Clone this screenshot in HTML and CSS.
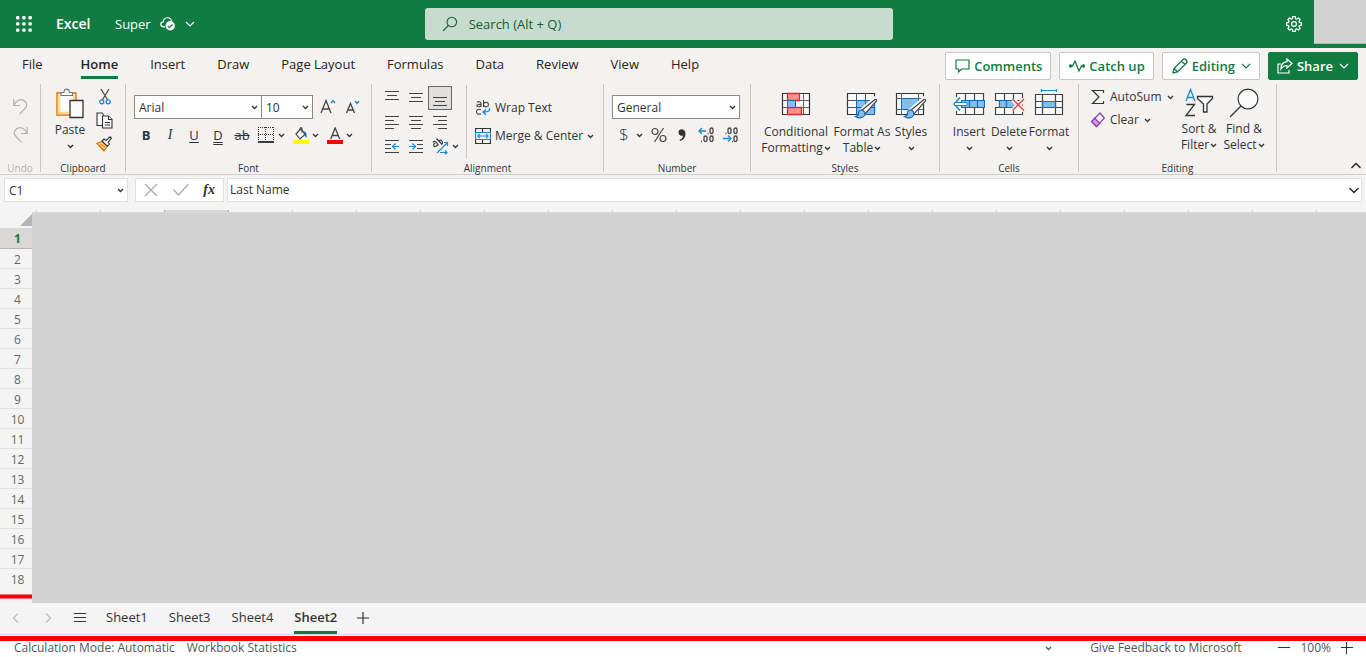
FILE: index.html
```html
<!DOCTYPE html>
<html lang="en">
<head>
<meta charset="utf-8">
<meta name="viewport" content="width=device-width, initial-scale=1">
<title>Super - Excel</title>
<link rel="stylesheet" href="styles.css">
</head>
<body>
<svg class="symbols" aria-hidden="true">
  <symbol id="chev" viewBox="0 0 7 7"><path d="M1 2l2.5 2.500L6 2" fill="none" stroke="currentColor" stroke-width="1.300"/></symbol>
  <symbol id="chev-wide" viewBox="0 0 10 10"><path d="M1 3l4 4 4-4" fill="none" stroke="currentColor" stroke-width="1.100"/></symbol>
</svg>

<header class="titlebar">
  <button class="bare launcher" aria-label="App launcher">
    <svg width="16" height="16" viewBox="0 0 16 16" fill="#fff"><rect width="3.4" height="3.4" rx="1"/><rect x="6.2" width="3.4" height="3.4" rx="1"/><rect x="12.4" width="3.4" height="3.4" rx="1"/><rect y="6.2" width="3.4" height="3.4" rx="1"/><rect x="6.2" y="6.2" width="3.4" height="3.4" rx="1"/><rect x="12.4" y="6.2" width="3.4" height="3.4" rx="1"/><rect y="12.4" width="3.4" height="3.4" rx="1"/><rect x="6.2" y="12.4" width="3.4" height="3.4" rx="1"/><rect x="12.4" y="12.4" width="3.4" height="3.4" rx="1"/></svg>
  </button>
  <a class="brand" href="#">Excel</a>
  <button class="bare docname"><span>Super</span>
    <svg width="16" height="14" viewBox="0 0 16 14"><path d="M5 9.8H3.6C-.2 9.4-.1 5 3.3 4.8 3.7-.4 10.5-.5 11.4 4" fill="none" stroke="#fff" stroke-width="1.2"/><circle cx="10.2" cy="8.8" r="4.7" fill="#fff"/><path d="M7.8 8.9l1.7 1.7 3.1-3.3" fill="none" stroke="#107c41" stroke-width="1.2"/></svg>
    <svg width="10" height="10"><use href="#chev-wide"/></svg>
  </button>
  <label class="search">
    <svg width="16" height="16" viewBox="0 0 16 16" fill="none" stroke="#185c37" stroke-width="1.1"><circle cx="9.8" cy="6" r="4.8"/><path d="M6.3 9.5L1 14.8"/></svg>
    <input type="search" placeholder="Search (Alt + Q)" aria-label="Search">
  </label>
  <button class="bare gear" aria-label="Settings">
    <svg width="16" height="16" viewBox="0 0 16 16" fill="none" stroke="#fff" stroke-width="1.2"><path d="M6.8.7h2.4l.5 2 1 .4 1.8-1.1 1.6 1.6L13 5.400l.4 1 2 .5v2.300l-2 .5-.4 1 1.100 1.800-1.600 1.600L10.700 13l-1 .4-.5 2H6.800l-.5-2-1-.4-1.800 1.100-1.600-1.600L3 10.700l-.4-1-2-.5V6.900l2-.5.4-1-1.100-1.800L3.500 2l1.800 1.100 1-.4z"/><circle cx="8" cy="8" r="2.4"/></svg>
  </button>
  <div class="account"></div>
</header>

<div class="tabs-row">
  <nav class="tabs">
    <button class="tab">File</button><button class="tab active">Home</button><button class="tab">Insert</button><button class="tab">Draw</button><button class="tab">Page Layout</button><button class="tab">Formulas</button><button class="tab">Data</button><button class="tab">Review</button><button class="tab">View</button><button class="tab">Help</button>
  </nav>
  <div class="actions">
    <button class="action"><svg width="15" height="14" viewBox="0 0 15 14" fill="none" stroke="currentColor" stroke-width="1.2"><path d="M1 1h13v9H6.500L3.500 13v-3H1z"/></svg>Comments</button>
    <button class="action"><svg width="16" height="14" viewBox="0 0 16 14" fill="none" stroke="currentColor" stroke-width="1.300"><path d="M1 7h2.500L6 2l4 10 2.500-5H15"/><circle cx="1.500" cy="7" r="1" fill="currentColor"/><circle cx="14.500" cy="7" r="1" fill="currentColor"/></svg>Catch up</button>
    <button class="action"><svg width="16" height="16" viewBox="0 0 16 16" fill="none" stroke="currentColor" stroke-width="1.300"><path d="M1 15l1-4.500L11 1.500c2-1.500 5 1 3.500 3.500L5.500 14zM9.500 3l3.500 3.500M2.300 10.500l3.200 3.200"/></svg>Editing<svg width="10" height="10"><use href="#chev-wide"/></svg></button>
    <button class="action primary"><svg width="16" height="16" viewBox="0 0 16 16" fill="none" stroke="currentColor" stroke-width="1.200"><path d="M4 6H1v9h11v-3M10 1l5 4.500L10 10V7.500C7 7.500 5.500 8.500 4 11c0-4.500 2.500-7 6-7.300z"/></svg>Share<svg width="10" height="10"><use href="#chev-wide"/></svg></button>
  </div>
</div>

<section class="ribbon" aria-label="Home ribbon">
  <div class="group g-undo">
    <div class="group-body undo-body">
      <button class="bare" aria-label="Undo"><svg width="15" height="17" viewBox="0 0 15 17" fill="none" stroke="#b5b3b1" stroke-width="1.200"><path d="M.8 1v6.500H7M1 7.200C3 3 7 0 11 2.500c3.500 2.500 3.500 5.500 1 8L6.500 16.300"/></svg></button>
      <button class="bare" aria-label="Redo"><svg width="15" height="17" viewBox="0 0 15 17" fill="none" stroke="#b5b3b1" stroke-width="1.200"><path d="M14.200 1v6.500H8M14 7.200C12 3 8 0 4 2.500.5 5 .5 8 3 10.500l5.500 5.800"/></svg></button>
    </div>
    <span class="group-label muted">Undo</span>
  </div>

  <div class="group g-clipboard">
    <div class="group-body clip-body">
      <button class="bare paste">
        <svg width="28" height="32" viewBox="0 0 28 32"><path d="M1 5h19v22H1z" fill="#fafafa" stroke="#e07000" stroke-width="1.400"/><path d="M3 7v18h10" fill="none" stroke="#f8dc8c" stroke-width="2.400"/><path d="M18 7v5" stroke="#f8dc8c" stroke-width="2.400"/><path d="M5 7.500V4.500h3C8 0 13.500 0 13.500 4.500h3v3z" fill="#fafafa" stroke="#777" stroke-width="1.100"/><path d="M14 12.500h13v17H14z" fill="#fafafa" stroke="#333" stroke-width="1.300"/></svg>
        <span>Paste</span>
        <svg width="7" height="7"><use href="#chev"/></svg>
      </button>
      <div class="clip-small">
        <button class="bare" aria-label="Cut"><svg width="12" height="17" viewBox="0 0 12 17" fill="none"><path d="M2 1l6.700 11M10 1L3.300 12" stroke="#444" stroke-width="1.200"/><circle cx="2.800" cy="13.800" r="2" stroke="#1e88d2" stroke-width="1.300"/><circle cx="9.200" cy="13.800" r="2" stroke="#1e88d2" stroke-width="1.300"/></svg></button>
        <button class="bare" aria-label="Copy"><svg width="17" height="17" viewBox="0 0 17 17" fill="#fafafa" stroke="#333" stroke-width="1.100"><path d="M6 13.500H1V1h5l2 2.500"/><path d="M6.500 4h6l3.500 3.500V16H6.500z"/><path d="M12.500 4v3.500H16M9 10.500h5M9 13h5"/></svg></button>
        <button class="bare" aria-label="Format painter"><svg width="17" height="16" viewBox="0 0 17 16"><path d="M1 7.500l5-2 5 5-3 4.500z" fill="#f9d58a" stroke="#e07000" stroke-width="1.200"/><path d="M3 9.500l5 4.500M4 8l5 3" stroke="#e07000"/><path d="M6 5l2-2 2 1.500L14 .8l1.500 1.500-3.500 4L13.500 8l-2 2.300z" fill="#fafafa" stroke="#333" stroke-width="1.100"/></svg></button>
      </div>
    </div>
    <span class="group-label">Clipboard</span>
  </div>

  <div class="group g-font">
    <div class="group-body font-body">
      <div class="row row-top">
        <span class="combo combo-font"><select aria-label="Font"><option>Arial</option></select><svg width="7" height="7"><use href="#chev"/></svg></span><span class="combo combo-size"><select aria-label="Font size"><option>10</option></select><svg width="7" height="7"><use href="#chev"/></svg></span>
        <button class="bare grow" aria-label="Increase font size"><svg width="16" height="16" viewBox="0 0 16 16" fill="none"><path d="M1 14L6 1.500 11 14M2.700 10h6.600" stroke="#444" stroke-width="1.300"/><path d="M11 4l2-2.500L15 4" stroke="#1e88d2" stroke-width="1.300"/></svg></button>
        <button class="bare" aria-label="Decrease font size"><svg width="16" height="16" viewBox="0 0 16 16" fill="none"><path d="M1.500 14l4-9.500 4 9.500M3 11h5" stroke="#444" stroke-width="1.300"/><path d="M10 2l2 2.500L14 2" stroke="#1e88d2" stroke-width="1.300"/></svg></button>
      </div>
      <div class="row">
        <button class="bare fmt bold">B</button><button class="bare fmt italic">I</button><button class="bare fmt under">U</button><button class="bare fmt dunder">D</button><button class="bare fmt strike">ab</button>
        <button class="bare fmt" aria-label="Borders"><svg width="16" height="16" viewBox="0 0 16 16" fill="none" stroke="#333"><path d="M0 .5h16M0 7.500h16M.5 0v14M7.500 0v14M15.500 0v14" stroke-dasharray="1 1"/><path d="M0 15h16" stroke="#000" stroke-width="1.500"/></svg></button><svg class="drop" width="7" height="7"><use href="#chev"/></svg>
        <button class="bare fill" aria-label="Fill color"><svg width="16" height="17" viewBox="0 0 16 17"><path d="M3 7l5-5.500 4 6L7 12z" fill="#fafafa" stroke="#444" stroke-width="1.200"/><path d="M7 4V1.500c0-1.500 2-1.500 2 0V6" fill="none" stroke="#444"/><path d="M10 4.500c3-.5 4 2 3.500 6.500-1.500-1-2-3.500-1.500-4.500z" fill="#1565b0"/><path d="M0 13h16v4H0z" fill="#ff0"/></svg></button><svg class="drop" width="7" height="7"><use href="#chev"/></svg>
        <button class="bare fill" aria-label="Font color"><svg width="16" height="17" viewBox="0 0 16 17"><path d="M3.700 12L8.200 1 12.700 12M5.300 8.500h5.800" fill="none" stroke="#444" stroke-width="1.300"/><path d="M0 13h16v4H0z" fill="red"/></svg></button><svg class="drop" width="7" height="7"><use href="#chev"/></svg>
      </div>
    </div>
    <span class="group-label">Font</span>
  </div>

  <div class="group g-align">
    <div class="group-body align-body">
      <div class="align-grid">
        <button class="bare" aria-label="Top align"><svg class="lines" width="16" height="16" viewBox="0 0 16 16"><path d="M1 1.500h14M3 5.500h10M1 9.500h14"/></svg></button>
        <button class="bare" aria-label="Middle align"><svg class="lines" width="16" height="16" viewBox="0 0 16 16"><path d="M1 3.500h14M3 7.500h10M1 11.500h14"/></svg></button>
        <button class="bare pressed" aria-label="Bottom align"><svg class="lines" width="16" height="16" viewBox="0 0 16 16"><path d="M1 7.500h14M3 11.500h10M1 15.500h14"/></svg></button>
        <button class="bare" aria-label="Align left"><svg class="lines" width="16" height="16" viewBox="0 0 16 16"><path d="M1 2.500h14M1 6.500h9M1 10.500h14M1 14.500h9"/></svg></button>
        <button class="bare" aria-label="Center"><svg class="lines" width="16" height="16" viewBox="0 0 16 16"><path d="M1 2.500h14M3 6.500h10M1 10.500h14M3 14.500h10"/></svg></button>
        <button class="bare" aria-label="Align right"><svg class="lines" width="16" height="16" viewBox="0 0 16 16"><path d="M1 2.500h14M6 6.500h9M1 10.500h14M6 14.500h9"/></svg></button>
        <button class="bare" aria-label="Decrease indent"><svg class="lines" width="16" height="16" viewBox="0 0 16 16"><path d="M1 2.500h14M1 6.500h6M1 10.500h6M1 14.500h14"/><path class="blue" d="M15 8.500H9M11.500 5.500l-3 3 3 3"/></svg></button>
        <button class="bare" aria-label="Increase indent"><svg class="lines" width="16" height="16" viewBox="0 0 16 16"><path d="M1 2.500h14M9 6.500h6M9 10.500h6M1 14.500h14"/><path class="blue" d="M1 8.500h6M4.500 5.500l3 3-3 3"/></svg></button>
        <button class="bare" aria-label="Orientation"><svg class="lines" width="17" height="17" viewBox="0 0 17 17"><path d="M1 4.500c1-2.500 3.500-1 5.500 3M3.500 5C0 6 2 11 5.500 7M4.500.5L10 6.500M7 3c2-2.500 5 1.500 2.500 3.500"/><path class="blue" d="M5 15L15.500 4.500M12 4.500h3.500V8M8 14.500h7M13 12.500l2 2-2 2"/></svg></button>
        <svg class="drop" width="7" height="7"><use href="#chev"/></svg>
      </div>
      <div class="align-text">
        <button class="bare"><svg width="16" height="17" viewBox="0 0 16 17" fill="none" stroke="#444" stroke-width="1.100"><path d="M2 3.500c1-1.500 4-1 4 1V8M6 5.500C3 5 1.500 6 2 7s3 1.300 4-.5M8.500 1v7M8.500 5c1-2.500 5-2 5 .5s-4 3.500-5 .5M6 10.800c-3-1.500-4.500 0-4.500 2s2 3.200 4.500 2"/><path d="M14.500 9v1.500c0 2-2 2.500-6 2.500M11 10.500L8 13l3 3" stroke="#1e88d2" stroke-width="1.300"/></svg>Wrap Text</button>
        <button class="bare"><svg width="16" height="16" viewBox="0 0 16 16" fill="none" stroke="#333"><path d="M.5.5h15v15H.5zM7.500.5v4M7.500 12v3.500" stroke-width="1.200"/><path d="M.5 4.500h15v7H.5z" fill="#eef6fc" stroke="#1e88d2" stroke-width="1.200"/><path d="M3 8h10M5 5.800L2.800 8 5 10.200M11 5.800L13.200 8 11 10.200" stroke="#1e88d2" stroke-width="1.200"/></svg>Merge &amp; Center<svg width="7" height="7"><use href="#chev"/></svg></button>
      </div>
    </div>
    <span class="group-label">Alignment</span>
  </div>

  <div class="group g-number">
    <div class="group-body font-body">
      <div class="row row-top"><span class="combo combo-num"><select aria-label="Number format"><option>General</option></select><svg width="7" height="7"><use href="#chev"/></svg></span></div>
      <div class="row number-row">
        <button class="bare num dollar">$</button><svg class="drop" width="7" height="7"><use href="#chev"/></svg>
        <button class="bare num" aria-label="Percent"><svg width="16" height="16" viewBox="0 0 16 16" fill="none" stroke="#444" stroke-width="1.200"><circle cx="4" cy="4.500" r="3"/><circle cx="12" cy="11.500" r="3"/><path d="M12.500 1L3.500 15"/></svg></button>
        <button class="bare num" aria-label="Comma"><svg width="10" height="14" viewBox="0 0 10 14"><path d="M1.500 4c0-4 7-4 7 1.500 0 4-2 6.500-5.500 7.500l-.5-1C4.500 11 6 9.500 6 7.500 3.500 8.500 1.500 6.500 1.500 4z" fill="#333"/></svg></button>
        <button class="bare num" aria-label="Increase decimal"><svg width="17" height="16" viewBox="0 0 17 16" fill="none" stroke="#444" stroke-width="1.300"><path d="M8 4H1M4 1L1 4l3 3" stroke="#1e88d2"/><rect x="12" y="1" width="3" height="5.500" rx="1.500"/><rect x="6" y="9" width="3" height="5.500" rx="1.500"/><rect x="12" y="9" width="3" height="5.500" rx="1.500"/><path d="M9.500 6.500h1M3 14.500h1"/></svg></button>
        <button class="bare num" aria-label="Decrease decimal"><svg width="17" height="16" viewBox="0 0 17 16" fill="none" stroke="#444" stroke-width="1.300"><path d="M1 11.500h8M6 8.500l3 3-3 3" stroke="#1e88d2"/><rect x="6" y="1" width="3" height="5.500" rx="1.500"/><rect x="12" y="1" width="3" height="5.500" rx="1.500"/><rect x="12" y="9" width="3" height="5.500" rx="1.500"/><path d="M3.500 6.500h1M10 14.500h1"/></svg></button>
      </div>
    </div>
    <span class="group-label">Number</span>
  </div>

  <div class="group g-styles">
    <div class="group-body big-body">
      <button class="bare big w-cond"><svg width="30" height="30" viewBox="0 0 30 30"><path d="M1.500 4.500h27v21h-27z" fill="#fafafa"/><path d="M1 11.500h28M1 18.500h28M6.500 4v21M14.500 4v21M22.500 4v21" stroke="#666"/><path d="M1.500 4.500h27v21h-27z" fill="none" stroke="#333" stroke-width="1.200"/><path d="M6.500 4.500h12v7h-12zM6.500 18.500h14v7h-14z" fill="#ff9090" stroke="#d92b2b" stroke-width="1.300"/><path d="M6.500 11.500h8v7h-8z" fill="#83bdec" stroke="#1769b0"/></svg><span>Conditional<br>Formatting<svg width="7" height="7"><use href="#chev"/></svg></span></button>
      <button class="bare big w-fmt"><svg width="32" height="30" viewBox="0 0 32 30"><path d="M1.500 4.500h27v21h-27z" fill="#fafafa" stroke="#333" stroke-width="1.200"/><path d="M10.500 11.500h18v14h-18z" fill="#83bdec"/><path d="M1 11.500h27M1 18.500h27M10.500 4v21M19.500 4v21" stroke="#555"/><path d="M10.500 11.500h18v14h-18zM10.500 18.500h18M19.500 11.500v14" fill="none" stroke="#1769b0"/><path d="M31 9L14 24" stroke="#f3f2f1" stroke-width="6"/><path d="M29 10.500c1-.5 2 .5 1.500 1.500L19 25l-4-3z" fill="#fafafa" stroke="#444" stroke-width="1.200"/><path d="M15 21c3 0 5 3 3.500 5.500-2 3-6 3-9 1 3-.5 3-2 3-3.500s1-3 2.500-3z" fill="#83bdec" stroke="#1769b0" stroke-width="1.200"/></svg><span>Format As<br>Table<svg width="7" height="7"><use href="#chev"/></svg></span></button>
      <button class="bare big w-sty"><svg width="32" height="30" viewBox="0 0 32 30"><path d="M1.500 4.500h27v21h-27z" fill="#fafafa" stroke="#333" stroke-width="1.200"/><path d="M1 9.500h27M1 20.500h27M6.500 4v21M23.500 4v21" stroke="#666"/><path d="M6.500 9.500h17v11h-17z" fill="#83bdec" stroke="#1769b0"/><path d="M31 9L14 24" stroke="#f3f2f1" stroke-width="6"/><path d="M29 10.500c1-.5 2 .5 1.500 1.500L19 25l-4-3z" fill="#fafafa" stroke="#444" stroke-width="1.200"/><path d="M15 21c3 0 5 3 3.500 5.500-2 3-6 3-9 1 3-.5 3-2 3-3.500s1-3 2.500-3z" fill="#83bdec" stroke="#1769b0" stroke-width="1.200"/></svg><span>Styles<br><svg width="7" height="7"><use href="#chev"/></svg></span></button>
    </div>
    <span class="group-label">Styles</span>
  </div>

  <div class="group g-cells">
    <div class="group-body big-body">
      <button class="bare big w-cell"><svg width="32" height="30" viewBox="0 0 32 30"><path d="M3.500 4.500h27v21h-27zM12.500 4v21M21.500 4v21M3.500 11.500h27M3.500 18.500h27" fill="#fafafa" stroke="#444" stroke-width="1.200"/><path d="M8.500 11.500h23v7h-23zM16.500 11.500v7M24.500 11.500v7" fill="#83bdec" stroke="#1769b0" stroke-width="1.200"/><path d="M0 8h8v14H0z" fill="#f3f2f1"/><path d="M7 8.500L1 15l6 6.500" fill="none" stroke="#1e88d2" stroke-width="1.500"/><path d="M2 13.500h12v3H2" fill="#fafafa" stroke="#1e88d2"/></svg><span>Insert<br><svg width="7" height="7"><use href="#chev"/></svg></span></button>
      <button class="bare big w-cell"><svg width="32" height="30" viewBox="0 0 32 30"><path d="M2.500 4.500h27v21h-27zM11.500 4v21M20.500 4v21M2.500 11.500h27M2.500 18.500h27" fill="#fafafa" stroke="#444" stroke-width="1.200"/><path d="M0 12h6v6H0z" fill="#f3f2f1"/><path d="M6.500 11.500h17v7h-17zM13.500 11.500v7" fill="#83bdec" stroke="#1769b0" stroke-width="1.200"/><path d="M20 10.500l11 11m0-11l-11 11" stroke="#f3f2f1" stroke-width="5"/><path d="M19.500 10L31 21.500M31 10L19.500 21.500" stroke="#e64545" stroke-width="1.400"/></svg><span>Delete<br><svg width="7" height="7"><use href="#chev"/></svg></span></button>
      <button class="bare big w-cell"><svg width="30" height="30" viewBox="0 0 30 30"><path d="M1.500 5.500h27v20h-27zM8.500 5v20M21.500 5v20M1.500 12.500h27M1.500 18.500h27" fill="#fafafa" stroke="#444" stroke-width="1.200"/><path d="M8.500 12.500h13v6h-13z" fill="#83bdec" stroke="#1769b0" stroke-width="1.200"/><path d="M7.500 0v3M22.500 0v3M7.500 1.500h15" stroke="#1e88d2" stroke-width="1.200"/></svg><span>Format<br><svg width="7" height="7"><use href="#chev"/></svg></span></button>
    </div>
    <span class="group-label">Cells</span>
  </div>

  <div class="group g-edit">
    <div class="group-body edit-body">
      <div class="edit-small">
        <button class="bare"><svg width="14" height="16" viewBox="0 0 14 16" fill="none" stroke="#333" stroke-width="1.200"><path d="M12.500 4V1.500h-11L8 8l-6.500 6.500h11V12"/></svg>AutoSum<svg width="7" height="7"><use href="#chev"/></svg></button>
        <button class="bare"><svg width="14" height="16" viewBox="0 0 14 16"><path d="M.7 9.500l8.300-8.500 4.300 5L5.500 14.500z" fill="#fafafa" stroke="#9b3fae" stroke-width="1.300"/><path d="M.7 9.500l3-3.200 5 5-3.200 3.200z" fill="#d89be0" stroke="#9b3fae" stroke-width="1.300"/></svg>Clear<svg width="7" height="7"><use href="#chev"/></svg></button>
      </div>
      <button class="bare big w-sort"><svg width="30" height="30" viewBox="0 0 30 30" fill="none" stroke-width="1.300"><path d="M2 13l4.500-11.500L11 13M3.500 9.500h6" stroke="#1e88d2"/><path d="M2.500 16.500h8L2 27.500h9" stroke="#333"/><path d="M13.500 8.500h15v2L23 16v8h-3.500v-8l-6-5.500z" fill="#fafafa" stroke="#333"/></svg><span>Sort &amp;<br>Filter<svg width="7" height="7"><use href="#chev"/></svg></span></button>
      <button class="bare big w-find"><svg width="30" height="30" viewBox="0 0 30 30" fill="none" stroke="#333" stroke-width="1.200"><circle cx="19" cy="11" r="9.900" fill="#fafafa"/><path d="M12 18L1 29"/></svg><span>Find &amp;<br>Select<svg width="7" height="7"><use href="#chev"/></svg></span></button>
    </div>
    <span class="group-label">Editing</span>
  </div>
  <button class="bare collapse" aria-label="Collapse ribbon"><svg width="10" height="10" viewBox="0 0 10 10" fill="none" stroke="#222" stroke-width="1.400"><path d="M.5 7L5 2.500 9.500 7"/></svg></button>
</section>

<div class="formula-row">
  <span class="combo name-box"><select aria-label="Name box"><option>C1</option></select><svg width="7" height="7"><use href="#chev"/></svg></span>
  <div class="fx-tools">
    <button class="bare" aria-label="Cancel"><svg width="14" height="14" viewBox="0 0 14 14" stroke="#aaa" stroke-width="1.200"><path d="M1 1l12 12M13 1L1 13"/></svg></button>
    <button class="bare" aria-label="Enter"><svg width="16" height="14" viewBox="0 0 16 14" fill="none" stroke="#aaa" stroke-width="1.200"><path d="M.5 6.500l5 5.500 10-11"/></svg></button>
    <button class="bare fx">fx</button>
  </div>
  <div class="formula"><input type="text" value="Last Name" aria-label="Formula bar"><button class="bare" aria-label="Expand formula bar"><svg width="10" height="10" viewBox="0 0 10 10"><path d="M.5 3L5 7.500 9.500 3" fill="none" stroke="#222" stroke-width="1.300"/></svg></button></div>
</div>

<main class="sheet">
  <div class="row-heads">
    <button class="bare corner" aria-label="Select all"><svg width="12" height="12" viewBox="0 0 12 12"><path d="M12 0v12H0z" fill="#b5b5b5"/></svg></button>
    <ol class="rows">
      <li class="current">1</li><li>2</li><li>3</li><li>4</li><li>5</li><li>6</li><li>7</li><li>8</li><li>9</li><li>10</li><li>11</li><li>12</li><li>13</li><li>14</li><li>15</li><li>16</li><li>17</li><li>18</li>
    </ol>
    <div class="mark"></div>
  </div>
  <div class="cells">
    <div class="col-heads"><span class="selected"></span></div>
    <div class="canvas"></div>
  </div>
</main>

<nav class="sheet-tabs">
  <button class="bare arrow" aria-label="Previous sheet"><svg width="8" height="10" viewBox="0 0 8 10" fill="none" stroke="#bbb" stroke-width="1.200"><path d="M6 .5L1.500 5 6 9.500"/></svg></button>
  <button class="bare arrow" aria-label="Next sheet"><svg width="8" height="10" viewBox="0 0 8 10" fill="none" stroke="#bbb" stroke-width="1.200"><path d="M2 .5L6.500 5 2 9.500"/></svg></button>
  <button class="bare arrow" aria-label="All sheets"><svg width="14" height="10" viewBox="0 0 14 10" stroke="#333"><path d="M1 .5h12M1 4.500h12M1 8.500h12"/></svg></button>
  <button class="stab">Sheet1</button><button class="stab">Sheet3</button><button class="stab">Sheet4</button><button class="stab active">Sheet2</button>
  <button class="bare add" aria-label="New sheet"><svg width="12" height="12" viewBox="0 0 12 12" stroke="#333" stroke-width="1.200"><path d="M6 0v12M0 6h12"/></svg></button>
</nav>

<footer class="status">
  <span>Calculation Mode: Automatic</span>
  <span>Workbook Statistics</span>
  <div class="status-right">
    <svg width="7" height="7"><use href="#chev"/></svg>
    <a href="#">Give Feedback to Microsoft</a>
    <div class="zoom">
      <button class="bare" aria-label="Zoom out"><svg width="12" height="12" viewBox="0 0 12 12" stroke="#333"><path d="M0 5.500h12"/></svg></button>
      <span>100%</span>
      <button class="bare" aria-label="Zoom in"><svg width="12" height="12" viewBox="0 0 12 12" stroke="#333"><path d="M0 5.500h12M5.500 0v12"/></svg></button>
    </div>
  </div>
</footer>
</body>
</html>
```

FILE: styles.css
```css
* { box-sizing: border-box; }

body {
  margin: 0;
  background: #fff;
  color: #333;
  font: 12px/16px "Open Sans", "Noto Sans", sans-serif;
}

button, select, input { font: inherit; color: inherit; }
svg { flex: none; display: block; }
.symbols { position: absolute; width: 0; height: 0; }

.bare {
  display: flex;
  align-items: center;
  justify-content: center;
  padding: 0;
  border: 0;
  background: none;
}

/* Title bar */
.titlebar {
  display: flex;
  align-items: center;
  height: 48px;
  background: #107c41;
  color: #fff;
}
.launcher { width: 48px; height: 48px; }
.brand {
  width: 67px;
  padding-left: 8px;
  color: #fff;
  font-size: 14px;
  font-weight: 600;
  text-decoration: none;
}
.docname { gap: 9px; font-size: 13px; }
.search {
  display: flex;
  align-items: center;
  gap: 11px;
  width: 468px;
  height: 32px;
  margin: 0 auto 0 230px;
  padding: 0 17px;
  border-radius: 3px;
  background: #c6dccf;
  color: #185c37;
  font-size: 13px;
}
.search input {
  flex: 1;
  min-width: 0;
  padding: 0;
  border: 0;
  outline: 0;
  background: none;
}
.search input::placeholder { color: #185c37; opacity: 1; }
.gear { width: 40px; height: 48px; }
.account {
  align-self: flex-start;
  width: 52px;
  height: 44px;
  background: #d2d2d2;
  border-bottom: 1px solid #a8bdb0;
}

/* Ribbon tabs */
.tabs-row {
  display: flex;
  justify-content: space-between;
  height: 36px;
  background: #f3f2f1;
}
.tabs { display: flex; padding-left: 6px; }
.tab {
  display: flex;
  flex-direction: column;
  height: 31px;
  padding: 8px 16px 0;
  border: 0;
  background: none;
  color: #252423;
  font-size: 13px;
  white-space: nowrap;
}
.tab:first-child { margin-right: 6px; }
.tab.active { font-weight: 600; }
.tab.active::after {
  content: "";
  width: 100%;
  height: 3px;
  margin-top: 4px;
  background: #107c41;
}
.actions { display: flex; gap: 8px; padding: 4px 8px 4px 0; }
.action {
  display: flex;
  align-items: center;
  gap: 4px;
  height: 28px;
  padding: 0 8px 0 9px;
  border: 1px solid #c8c6c4;
  border-radius: 2px;
  background: #fff;
  color: #107c41;
  font-size: 13px;
  font-weight: 600;
}
.action svg + svg, .action svg:last-child:not(:first-child) { margin-left: 2px; }
.action.primary { padding-left: 8px; border-color: #107c41; background: #107c41; color: #fff; }

/* Ribbon */
.ribbon {
  display: flex;
  height: 91px;
  border-bottom: 1px solid #cfcdcb;
  background: #f3f2f1;
}
.group {
  display: flex;
  flex-direction: column;
  flex: none;
  height: 88px;
  border-right: 1px solid #c8c6c4;
}
.group-body { flex: 1; min-height: 0; }
.group-label {
  height: 12px;
  margin-bottom: -2px;
  font-size: 10px;
  line-height: 12px;
  text-align: center;
}
.muted { color: #b5b3b1; }
.g-undo { width: 41px; }
.g-clipboard { width: 85px; }
.g-font { width: 246px; }
.g-align { width: 232px; }
.g-number { width: 147px; }
.g-styles { width: 189px; }
.g-cells { width: 139px; }
.g-edit { width: 198px; }
.collapse { margin: auto 5px 3px auto; }

.undo-body {
  display: flex;
  flex-direction: column;
  align-items: center;
  gap: 11px;
  padding-top: 14px;
}

.clip-body { display: flex; gap: 8px; padding: 4px 11px 0 11px; }
.paste { flex-direction: column; justify-content: flex-start; width: 36px; }
.paste span { margin: 2px 0 5px; }
.clip-small {
  display: flex;
  flex-direction: column;
  align-items: center;
  gap: 7px;
  width: 17px;
}

.font-body {
  display: flex;
  flex-direction: column;
  gap: 4px;
  padding: 11px 8px 0;
}
.row { display: flex; align-items: center; height: 24px; }
.combo { display: grid; align-items: center; height: 24px; border: 1px solid #8a8886; background: #fff; }
.combo select {
  grid-area: 1 / 1;
  width: 100%;
  height: 100%;
  padding: 1px 4px 0;
  border: 0;
  background: none;
  appearance: none;
}
.combo svg { grid-area: 1 / 1; justify-self: end; margin-right: 3px; pointer-events: none; }
.combo-font { width: 128px; }
.combo-size { width: 52px; margin-left: -1px; }
.combo-num { width: 128px; }
.grow { margin: 0 9px 0 7px; }
.fmt { width: 24px; height: 24px; font-size: 13px; }
.bold { font-weight: 700; }
.italic { font-family: "Liberation Serif", serif; font-style: italic; font-size: 14px; }
.under { text-decoration: underline; text-underline-offset: 2px; }
.dunder { text-decoration: underline double; text-underline-offset: 2px; }
.strike { text-decoration: line-through; }
.drop { margin: 0 4px 0 0; }
.fill { width: 23px; }

.align-body { display: flex; padding-top: 1px; }
.align-grid {
  display: grid;
  grid-template-columns: repeat(3, 24px) 14px;
  grid-template-rows: repeat(3, 24px);
  align-content: start;
  align-items: center;
  padding: 1px 0 0 8px;
  height: 74px;
  border-right: 1px solid #c8c6c4;
}
.align-grid .bare { height: 24px; }
.align-grid .bare:nth-child(3n + 1) { grid-column: 1; }
.pressed { border: 1px solid #666; background: #e1dfdd; }
.lines { fill: none; stroke: #444; stroke-width: 1.2px; }
.lines .blue { stroke: #1e88d2; }
.align-text {
  display: flex;
  flex-direction: column;
  align-items: flex-start;
  gap: 12px;
  padding: 14px 0 0 8px;
}
.align-text .bare { gap: 4px; white-space: nowrap; }

.num { width: 24px; }
.dollar { font-size: 17px; font-weight: 300; }

.big-body { display: flex; justify-content: center; padding-top: 5px; }
.big { flex-direction: column; justify-content: flex-start; line-height: 16px; white-space: nowrap; }
.big > span { margin-top: 5px; }
.big span svg { display: inline-block; margin-left: 1px; }
.w-cond { width: 74px; }
.w-fmt { width: 58px; }
.w-sty { width: 40px; }
.w-cell { width: 40px; }

.edit-body { display: flex; padding: 4px 8px 0 12px; }
.edit-small {
  display: flex;
  flex-direction: column;
  align-items: flex-start;
  gap: 7px;
  width: 87px;
  padding-top: 1px;
}
.edit-small .bare { gap: 5px; }
.w-sort { width: 42px; }
.w-find { width: 48px; }
.edit-body .big > span { margin-top: 3px; }

/* Formula bar */
.formula-row {
  display: flex;
  height: 35px;
  padding: 3px 4px 8px;
  background: #f4f4f4;
}
.name-box { width: 124px; margin-right: 7px; border-color: #e1e1e1; }
.fx-tools {
  display: flex;
  align-items: center;
  justify-content: space-between;
  width: 89px;
  margin-right: 3px;
  padding: 0 8px;
  border: 1px solid #e1e1e1;
  background: #fff;
}
.fx { font: italic 600 14px "Liberation Serif", serif; }
.formula { display: flex; flex: 1; border: 1px solid #e1e1e1; background: #fff; }
.formula input { flex: 1; min-width: 0; padding: 0 2px; border: 0; outline: 0; background: none; }
.formula .bare { width: 14px; }

/* Grid */
.sheet {
  display: grid;
  grid-template-columns: 32px 1fr;
  background: #f4f4f4;
}
.corner { align-items: flex-end; justify-content: flex-end; width: 32px; height: 16px; }
.rows { margin: 2px 0 5px; padding: 0; list-style: none; }
.rows li {
  height: 20px;
  padding-left: 3px;
  border-bottom: 1px solid #e1e1e1;
  line-height: 21px;
  color: #666;
  text-align: center;
}
.rows li:last-child { border-bottom: 0; }
.rows .current { height: 21px; background: #d9d8d6; border-color: #b5b5b5; color: #107c41; font-weight: 700; }
.mark { height: 5px; margin-bottom: 4px; border: solid #ff7070; border-width: 1px 0; background: red; }
.cells { display: flex; flex-direction: column; }
.col-heads {
  height: 3px;
  background: repeating-linear-gradient(to right, transparent 0 4px, #d0d0d0 4px 5px, transparent 5px 64px);
  border-bottom: 1px solid #d8d8d8;
}
.selected { display: block; width: 65px; height: 2px; margin-left: 132px; background: #d9d8d6; border: solid #aaa; border-width: 0 1px; }
.canvas { flex: 1; background: #d2d2d2; }

/* Sheet tabs */
.sheet-tabs {
  display: flex;
  height: 32px;
  background: #f4f4f4;
  border-bottom: 1px solid #d8d8d8;
}
.arrow { width: 32px; height: 29px; }
.stab {
  height: 31px;
  padding: 0;
  margin-left: 10px;
  margin-right: 11px;
  border: 0;
  border-bottom: 3px solid transparent;
  background: none;
  font-size: 13px;
}
.stab.active { border-color: #217346; font-weight: 600; }
.add { width: 30px; height: 29px; }

/* Status bar */
.status {
  display: flex;
  gap: 12px;
  margin-top: 1px;
  padding: 0 13px 0 14px;
  border: solid red;
  border-width: 5px 0 0;
  line-height: 14px;
  color: #555;
}
.status-right { display: flex; align-items: center; margin-left: auto; }
.status a { margin-left: 38px; color: inherit; text-decoration: none; }
.zoom { display: flex; align-items: center; gap: 10px; margin-left: 37px; }
```
